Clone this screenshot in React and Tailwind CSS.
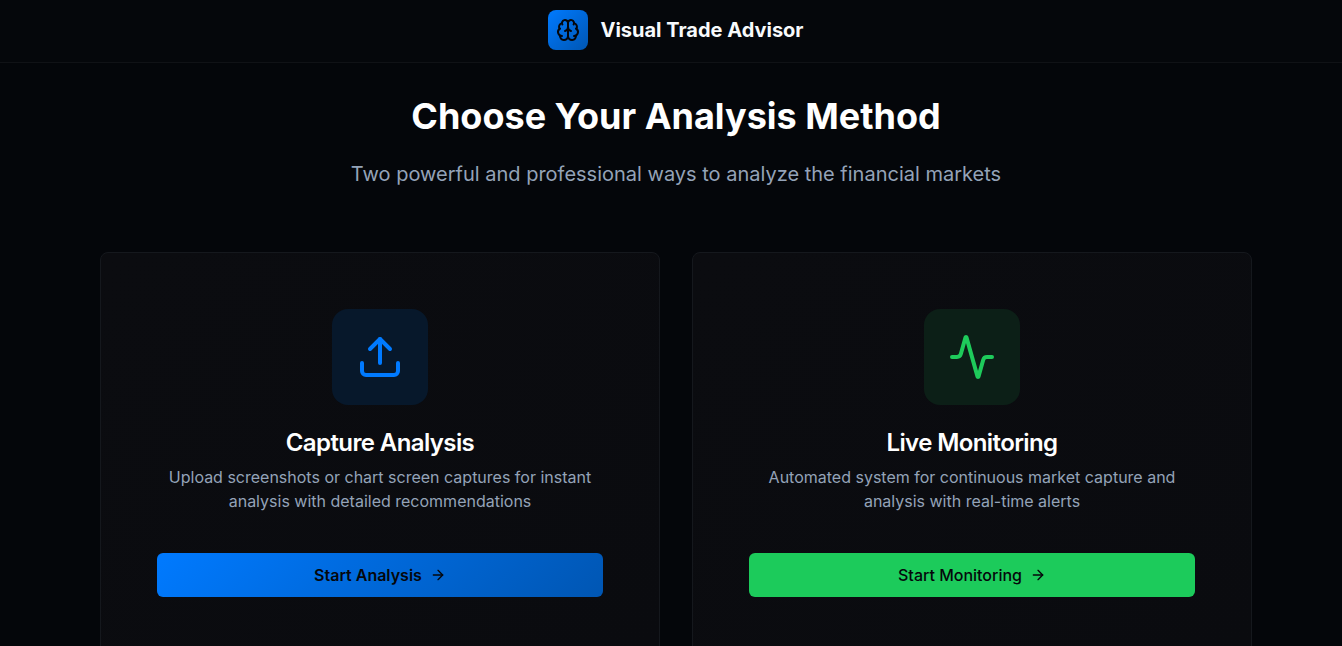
import React from "react";
import { Activity, ArrowRight, Brain, Upload } from "lucide-react";

const methods = [
  {
    title: "Capture Analysis",
    text: ["Upload screenshots or chart screen captures for instant", "analysis with detailed recommendations"],
    action: "Start Analysis",
    icon: <Upload size={48} className="text-[#007aff]" />,
    iconBg: "bg-[#07182b]",
    button: "bg-[linear-gradient(135deg,#007aff,#0056b3)] font-semibold",
  },
  {
    title: "Live Monitoring",
    text: ["Automated system for continuous market capture and", "analysis with real-time alerts"],
    action: "Start Monitoring",
    icon: <Activity size={48} className="text-[#1ecb5b]" />,
    iconBg: "bg-[#0c1f17]",
    button: "bg-[#1ccb5b] font-medium",
  },
];

const MethodCard = ({ method }) => (
  <div className="h-[420px] rounded-lg border border-[#15181d] bg-[linear-gradient(135deg,#0b0c10,#0a0b0f)] px-14 pt-14">
    <div className="flex flex-col items-center">
      <div className={`flex h-24 w-24 items-center justify-center rounded-2xl ${method.iconBg}`}>
        {method.icon}
      </div>
      <h2 className="mt-[22px] text-2xl leading-8 font-semibold tracking-[-0.6px] text-white">{method.title}</h2>
      <p className="mt-[6px] text-center text-base leading-6 text-[#94a3b8]">
        {method.text[0]}
        <br />
        {method.text[1]}
      </p>
      <button
        className={`mt-10 flex h-11 w-full items-center justify-center gap-2 rounded-md text-base text-[#05070b] ${method.button}`}
      >
        {method.action}
        <ArrowRight size={16} />
      </button>
    </div>
  </div>
);

export default function App() {
  return (
    <div className="h-[646px] overflow-hidden bg-[#04060a] font-['Inter',sans-serif]">
      <div className="w-[1352px]">
        <header className="flex h-[63px] items-center justify-center gap-3 border-b border-[#101216] bg-[#05070b] pb-[2px]">
          <div className="flex h-10 w-10 items-center justify-center rounded-lg bg-[linear-gradient(135deg,#007aff,#0056b3)] text-[#05070b]">
            <Brain size={24} />
          </div>
          <span className="text-xl font-bold text-[#f8fafc]">Visual Trade Advisor</span>
        </header>
        <main className="flex flex-col items-center pt-[30px]">
          <h1 className="text-4xl leading-[46px] font-bold text-white">Choose Your Analysis Method</h1>
          <p className="mt-[21px] text-xl leading-7 text-[#94a3b8]">
            Two powerful and professional ways to analyze the financial markets
          </p>
          <div className="mt-16 grid w-[1152px] grid-cols-2 gap-8">
            {methods.map((method) => (
              <MethodCard key={method.title} method={method} />
            ))}
          </div>
        </main>
      </div>
    </div>
  );
}
